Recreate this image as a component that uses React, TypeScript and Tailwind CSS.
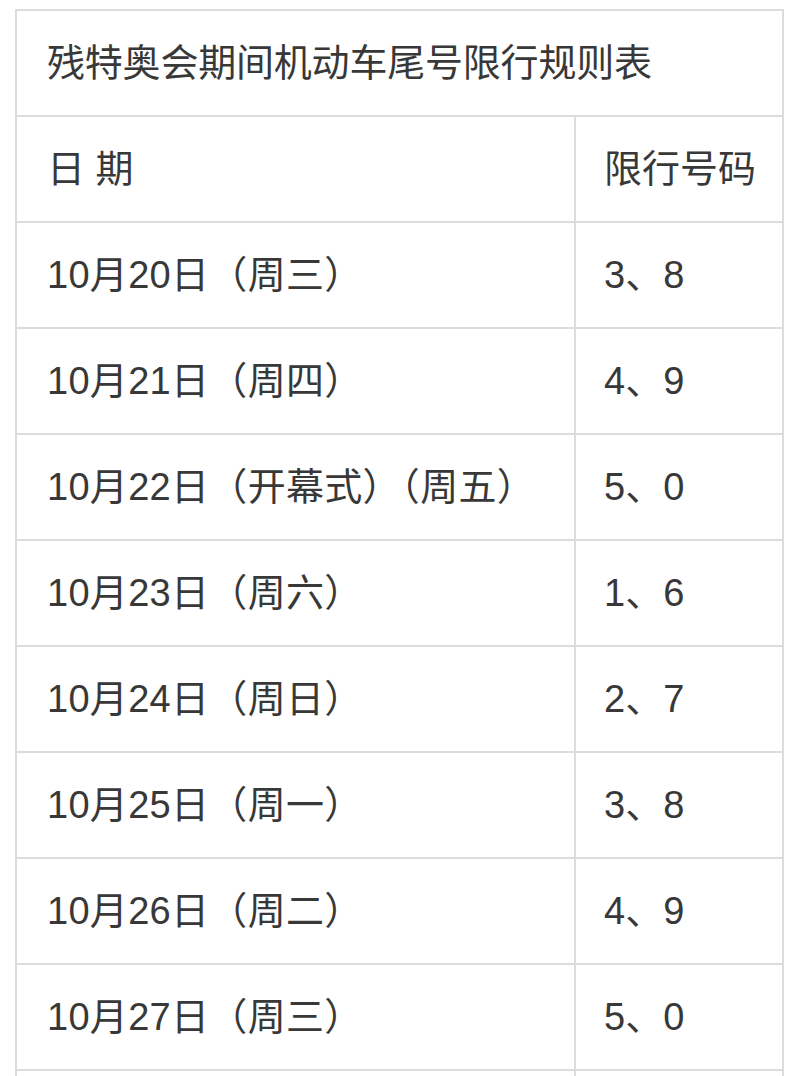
import React from 'react';

const rows: [string, string][] = [
  ['10月20日（周三）', '3、8'],
  ['10月21日（周四）', '4、9'],
  ['10月22日（开幕式）（周五）', '5、0'],
  ['10月23日（周六）', '1、6'],
  ['10月24日（周日）', '2、7'],
  ['10月25日（周一）', '3、8'],
  ['10月26日（周二）', '4、9'],
  ['10月27日（周三）', '5、0'],
  ['', ''],
];

const App: React.FC = () => {
  return (
    <div
      className="min-h-screen w-[800px] overflow-hidden bg-white pt-[9px] pl-[15px] text-[#383838]"
      style={{ fontFamily: '"Liberation Sans", "Noto Sans CJK SC", sans-serif' }}
    >
      <div className="w-[769px] border-l-2 border-r-2 border-t-2 border-[#dcdcdc]">
        <div className="flex h-[106px] items-center border-b-2 border-[#dcdcdc] pl-[30px] text-[38px] tracking-[-0.2px]">
          残特奥会期间机动车尾号限行规则表
        </div>
        <div className="flex h-[106px] border-b-2 border-[#dcdcdc] text-[38px]">
          <div className="flex w-[559px] items-center border-r-2 border-[#dcdcdc] pl-[30px]">日 期</div>
          <div className="flex flex-1 items-center pl-[28px]">限行号码</div>
        </div>
        {rows.map((r, i) => (
          <div key={i} className="flex h-[106px] border-b-2 border-[#dcdcdc] text-[38px]">
            <div className="flex w-[559px] items-center whitespace-pre border-r-2 border-[#dcdcdc] pl-[30px] tracking-[0.3px]">
              {r[0]}
            </div>
            <div className="flex flex-1 items-center pl-[28px]">{r[1]}</div>
          </div>
        ))}
      </div>
    </div>
  );
};

export default App;
